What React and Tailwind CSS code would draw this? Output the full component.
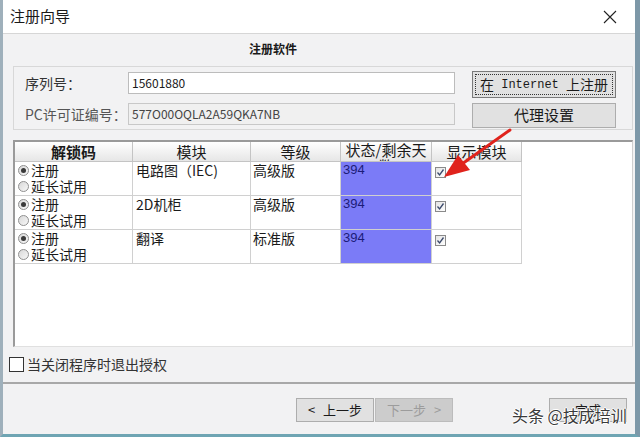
import React from 'react';

const CJK = { fontFamily: '"Noto Sans CJK SC", "Liberation Sans", sans-serif' };

function Radio({ checked }) {
  return (
    <span className="inline-flex h-[11px] w-[11px] shrink-0 items-center justify-center rounded-full border border-[#8f8f8f] bg-gradient-to-br from-[#d8d8d8] to-[#f8f8f8]">
      {checked && <span className="h-[5px] w-[5px] rounded-full bg-[#3a3a3a]" />}
    </span>
  );
}

function Check() {
  return (
    <span className="inline-flex h-[11px] w-[11px] items-center justify-center border border-[#8a8a8a] bg-gradient-to-br from-[#e4e4e4] to-[#ffffff]">
      <svg width="9" height="9" viewBox="0 0 9 9">
        <path d="M1.5 4.5 L3.6 7 L7.5 1.5" fill="none" stroke="#3b4a6b" strokeWidth="1.3" />
      </svg>
    </span>
  );
}

const rows = [
  { mod: '电路图（IEC)', lvl: '高级版' },
  { mod: '2D机柜', lvl: '高级版' },
  { mod: '翻译', lvl: '标准版' },
];

const headers = [
  ['解锁码', 'w-[118px] font-bold leading-[19px]'],
  ['模块', 'w-[118px] leading-[19px]'],
  ['等级', 'w-[90px] leading-[19px]'],
  ['状态/剩余天数', 'w-[91px] leading-[16px]'],
  ['显示模块', 'w-[90px] leading-[19px]'],
];

export default function App() {
  return (
    <div className="relative h-[437px] w-[640px] overflow-hidden bg-[#f2f2f3] text-[#1a1a1a]" style={CJK}>
      <div className="flex h-full flex-col border-l-[3px] border-r-[5px] border-b-[3px] border-l-[#9fb0bb] border-r-[#7d98a8] border-b-[#6fa5b3]">
        {/* title bar */}
        <div className="flex h-[34px] shrink-0 items-center justify-between border-b border-[#d6d6d6] bg-white pl-[7px] pr-[18px]">
          <span className="text-[15px]">注册向导</span>
          <svg width="14" height="14" viewBox="0 0 14 14">
            <path d="M1 1 L13 13 M13 1 L1 13" stroke="#222" strokeWidth="1.1" />
          </svg>
        </div>

        {/* heading */}
        <div className="h-[32px] shrink-0 pl-[246px] pt-[6px] text-[12px] font-bold">注册软件</div>

        {/* group box */}
        <div className="ml-[10px] mr-[2px] flex h-[64px] shrink-0 border border-[#d8d8d8] pt-[4px] pl-[11px] pr-[13px]">
          <div className="flex flex-col gap-[9px] pt-[1px]">
            <div className="flex h-[22px] items-center">
              <span className="w-[103px] text-[14px] text-[#333]">序列号：</span>
              <div className="flex h-[22px] w-[327px] items-center border border-[#bcbcbc] bg-white px-[3px] text-[12px]">15601880</div>
            </div>
            <div className="flex h-[22px] items-center">
              <span className="w-[103px] text-[14px] text-[#555]">PC许可证编号：</span>
              <div className="flex h-[22px] w-[327px] items-center border border-[#c8c8c8] bg-[#f0f0f0] px-[3px] text-[12px] text-[#444]">577O00OQLA2A59QKA7NB</div>
            </div>
          </div>
          <div className="ml-[17px] flex flex-col gap-[5px]">
            <div className="flex h-[27px] w-[144px] items-center justify-center border border-[#7a7a7a] bg-[#e1e1e1] p-[2px]">
              <div className="flex h-full w-full items-center justify-center border border-dotted border-[#333]">
                <span className="text-[14px]">在</span>
                <span className="text-[12px]" style={{ fontFamily: '"Liberation Mono", monospace' }}>&nbsp;Internet&nbsp;</span>
                <span className="text-[14px]">上注册</span>
              </div>
            </div>
            <div className="flex h-[25px] w-[144px] items-center justify-center border border-[#adadad] bg-[#e1e1e1] text-[15px]">代理设置</div>
          </div>
        </div>

        {/* table */}
        <div className="ml-[10px] mr-[2px] mt-[10px] h-[207px] shrink-0 border-l-2 border-t-2 border-[#9a9a9a] border-r border-r-[#d0d0d0] border-b border-b-[#e0e0e0] bg-white">
          <div className="flex h-[20px] text-[15px]">
            {headers.map(([t, c]) => (
              <div key={t} className={`${c} h-[20px] overflow-hidden border-r border-b border-[#c4c4c4] bg-gradient-to-b from-[#ffffff] to-[#e6e6e6] text-center`}>
                {t}
              </div>
            ))}
          </div>
          {rows.map((r, i) => (
            <div key={i} className="flex h-[34px] text-[14px]">
              <div className="flex w-[118px] flex-col border-r border-b border-[#d0d0d0] pl-[3px] leading-[16px]">
                <div className="flex items-center gap-[2px]"><Radio checked />注册</div>
                <div className="flex items-center gap-[2px]"><Radio />延长试用</div>
              </div>
              <div className="w-[118px] border-r border-b border-[#d0d0d0] pl-[3px] leading-[17px]">{r.mod}</div>
              <div className="w-[90px] border-r border-b border-[#d0d0d0] pl-[2px] leading-[17px]">{r.lvl}</div>
              <div className="w-[91px] border-r border-b border-[#d0d0d0] bg-[#7b7bf7] pl-[2px] text-[13px] leading-[16px] text-[#1c1c78]" style={{ fontFamily: '"Liberation Sans", sans-serif' }}>394</div>
              <div className="flex w-[90px] items-start border-r border-b border-[#d0d0d0] pl-[3px] pt-[5px]"><Check /></div>
            </div>
          ))}
        </div>

        {/* option */}
        <div className="ml-[6px] mt-[10px] flex h-[15px] shrink-0 items-center gap-[3px] text-[14px] text-[#333]">
          <span className="h-[15px] w-[15px] border border-[#333] bg-white" />
          当关闭程序时退出授权
        </div>

        <div className="mt-[10px] h-[2px] shrink-0 bg-[#a8a8a8]" />

        {/* footer buttons */}
        <div className="flex shrink-0 pt-[14px]">
          <div className="ml-[293px] flex h-[24px] w-[78px] items-center justify-center gap-[8px] border border-[#adadad] bg-[#e1e1e1] text-[13px]">
            <span>&lt;</span><span>上一步</span>
          </div>
          <div className="ml-[1px] flex h-[24px] w-[78px] items-center justify-center gap-[8px] border border-[#bcbcbc] bg-[#cccccc] text-[13px] text-[#9c9c9c]">
            <span>下一步</span><span>&gt;</span>
          </div>
          <div className="ml-[96px] flex h-[24px] w-[78px] items-start justify-center border border-[#adadad] bg-[#e1e1e1] pt-[1px] text-[13px]">完成</div>
        </div>
      </div>

      {/* watermark */}
      <div
        className="absolute left-[512px] top-[403px] text-[16px] text-[#3a3a3a]"
        style={{ textShadow: '1px 0 #fff, -1px 0 #fff, 0 1px #fff, 0 -1px #fff' }}
      >
        头条 @技成培训
      </div>

      {/* red arrow */}
      <svg className="pointer-events-none absolute left-0 top-0" width="640" height="437" viewBox="0 0 640 437">
        <path d="M510 130 L462 164" stroke="#e0231c" strokeWidth="3" strokeLinecap="round" />
        <path d="M444 177 L458 155 L470 170 Z" fill="#e0231c" />
      </svg>
    </div>
  );
}
